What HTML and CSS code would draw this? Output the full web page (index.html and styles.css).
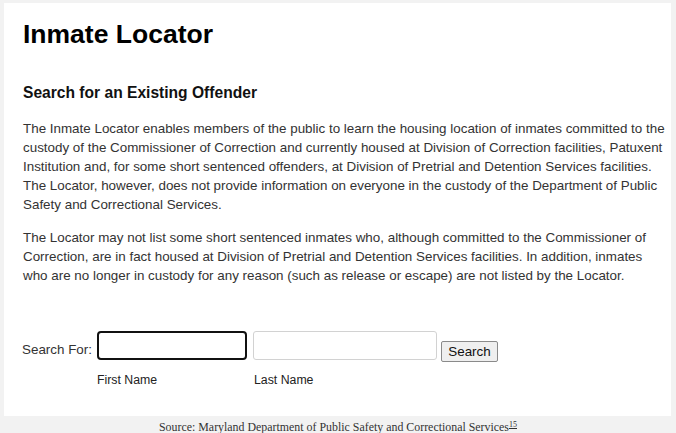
FILE: index.html
```html
<!DOCTYPE html>
<html>
<head>
<meta charset="utf-8">
<link rel="stylesheet" href="styles.css">
</head>
<body>
<div class="panel">
  <h1 class="title">Inmate Locator</h1>
  <h2 class="subtitle">Search for an Existing Offender</h2>
  <p class="para">The Inmate Locator enables members of the public to learn the housing location of inmates committed to the custody of the Commissioner of Correction and currently housed at Division of Correction facilities, Patuxent Institution and, for some short sentenced offenders, at Division of Pretrial and Detention Services facilities. The Locator, however, does not provide information on everyone in the custody of the Department of Public Safety and Correctional Services.</p>
  <p class="para para2">The Locator may not list some short sentenced inmates who, although committed to the Commissioner of Correction, are in fact housed at Division of Pretrial and Detention Services facilities. In addition, inmates who are no longer in custody for any reason (such as release or escape) are not listed by the Locator.</p>
  <form class="search">
    <label class="search-label" for="fn">Search For:</label>
    <input class="field field-focus" id="fn" type="text">
    <input class="field field-last" type="text">
    <button class="btn" type="button">Search</button>
    <span class="sub-label first">First Name</span>
    <span class="sub-label last">Last Name</span>
  </form>
</div>
<p class="caption">Source: Maryland Department of Public Safety and Correctional Services<sup class="ref">15</sup></p>
</body>
</html>
```

FILE: styles.css
```css
html, body {
  margin: 0;
  padding: 0;
}
body {
  background: #f2f2f2;
  font-family: "Liberation Sans", Arial, sans-serif;
  color: #333;
}
.panel {
  margin: 3px 5px 0 4px;
  height: 413px;
  box-sizing: border-box;
  background: #fff;
  padding: 16px 0 0 19px;
  overflow: hidden;
}
.title {
  margin: 0;
  font-size: 26.5px;
  line-height: 30px;
  font-weight: bold;
  color: #000;
}
.subtitle {
  margin: 34px 0 0;
  font-size: 15.6px;
  line-height: 20px;
  font-weight: bold;
  color: #111;
}
.para {
  margin: 16px 0 0;
  font-size: 13.4px;
  line-height: 19px;
  color: #333;
  width: 645px;
}
.para2 {
  margin-top: 14px;
}
.search {
  margin-top: 46px;
  display: grid;
  grid-template-columns: 75px 156px 188px 57px;
  grid-template-rows: 30px auto;
  row-gap: 10px;
  margin-left: -1px;
}
.search-label {
  font-size: 13.4px;
  line-height: 19px;
  color: #333;
  align-self: end;
  padding-bottom: 2px;
}
.field {
  box-sizing: border-box;
  height: 29px;
  margin: 0;
  padding: 0 4px;
  font: 13px "Liberation Sans", Arial, sans-serif;
  background: #fff;
  outline: none;
}
.field-focus {
  width: 150px;
  border: 2px solid #111;
  border-radius: 4px;
}
.field-last {
  width: 184px;
  border: 1px solid #d2d2d2;
  border-radius: 3px;
}
.btn {
  align-self: end;
  box-sizing: border-box;
  width: 57px;
  height: 21px;
  margin: 0 0 -1px;
  padding: 0;
  font: 13.4px "Liberation Sans", Arial, sans-serif;
  color: #111;
  background: #efefef;
  border: 1px solid #8a8a8a;
  border-radius: 2px;
}
.sub-label {
  font-size: 12.3px;
  line-height: 19px;
  color: #222;
}
.first {
  grid-column: 2;
  grid-row: 2;
}
.last {
  grid-column: 3;
  grid-row: 2;
  padding-left: 1px;
}
.caption {
  margin: 4px 0 0;
  text-align: center;
  font-family: "Liberation Serif", "Times New Roman", serif;
  font-size: 11.9px;
  line-height: 14px;
  color: #333;
}
.ref {
  font-size: 8px;
  line-height: 0;
  text-decoration: underline;
  vertical-align: 4px;
}
```
